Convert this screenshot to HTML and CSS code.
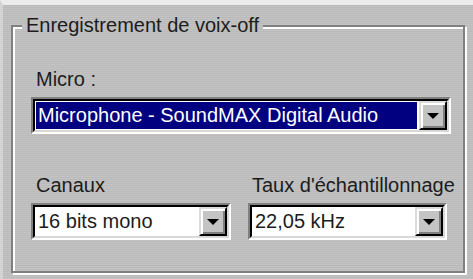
FILE: index.html
```html
<!DOCTYPE html>
<html lang="fr">
<head>
    <meta charset="UTF-8">
    <title>Enregistrement de voix-off</title>
    <link rel="stylesheet" href="styles.css">
</head>
<body>
    <fieldset class="group">
        <legend>Enregistrement de voix-off</legend>
        <div class="field">
            <label class="label">Micro :</label>
            <div class="combo">
                <div class="combo-inner">
                    <div class="combo-value"><span class="selected">Microphone - SoundMAX Digital Audio</span></div>
                    <div class="combo-btn"><span class="arrow"></span></div>
                </div>
            </div>
        </div>
        <div class="row">
            <div class="field">
                <label class="label">Canaux</label>
                <div class="combo">
                    <div class="combo-inner">
                        <div class="combo-value"><span class="text">16 bits mono</span></div>
                        <div class="combo-btn"><span class="arrow"></span></div>
                    </div>
                </div>
            </div>
            <div class="field">
                <label class="label label-right">Taux d'échantillonnage</label>
                <div class="combo">
                    <div class="combo-inner">
                        <div class="combo-value"><span class="text">22,05 kHz</span></div>
                        <div class="combo-btn"><span class="arrow"></span></div>
                    </div>
                </div>
            </div>
        </div>
    </fieldset>
</body>
</html>
```

FILE: styles.css
```css
html {
    background: repeating-linear-gradient(to bottom, #c3c3c3 0 1px, #bababa 1px 2px);
    background-attachment: fixed;
}
body {
    margin: 0;
    height: 279px;
    box-sizing: border-box;
    border-top: 5px solid #ececec;
    border-left: 3px solid #d3d3d3;
    padding: 9px 0 0 8px;
    font-family: "Liberation Sans", Arial, sans-serif;
    font-size: 20px;
    line-height: 23px;
    color: #1c1c1c;
}
.group {
    margin: 0;
    width: 454px;
    height: 259px;
    box-sizing: border-box;
    border: 2px solid #808080;
    box-shadow: inset 2px 2px 0 #fff, 2px 2px 0 #fff;
    padding: 31px 12px 0 18px;
}
.group legend {
    margin-left: -9px;
    padding: 0 4px;
    background: repeating-linear-gradient(to bottom, #c3c3c3 0 1px, #bababa 1px 2px);
    background-attachment: fixed;
}
.label {
    display: block;
    padding-left: 5px;
    margin-bottom: 6px;
    white-space: nowrap;
}
.label-right {
    padding-left: 4px;
}
.combo {
    height: 37px;
    box-sizing: border-box;
    border: 2px solid;
    border-color: #808080 #fff #fff #808080;
    background: #fff;
    display: flex;
}
.combo-inner {
    flex: 1;
    display: flex;
    border: 2px solid;
    border-color: #000 #d8d8d8 #d8d8d8 #000;
}
.combo-value {
    flex: 1;
    padding: 1px 2px 1px 1px;
    display: flex;
}
.selected, .text {
    flex: 1;
    padding-left: 2px;
    line-height: 27px;
    white-space: nowrap;
}
.selected {
    background: #000080;
    color: #fff;
}
.combo-btn {
    width: 28px;
    box-sizing: border-box;
    border: 2px solid;
    border-color: #dcdcdc #000 #000 #dcdcdc;
    box-shadow: inset 2px 2px 0 #fff, inset -2px -2px 0 #808080;
    background: #c4c4c4;
    display: flex;
    align-items: center;
    justify-content: center;
}
.arrow {
    width: 0;
    height: 0;
    border-left: 6px solid transparent;
    border-right: 6px solid transparent;
    border-top: 6px solid #000;
    margin-top: 1px;
}
.row {
    display: grid;
    grid-template-columns: 200px 199px;
    column-gap: 17px;
    margin-top: 40px;
}
```
